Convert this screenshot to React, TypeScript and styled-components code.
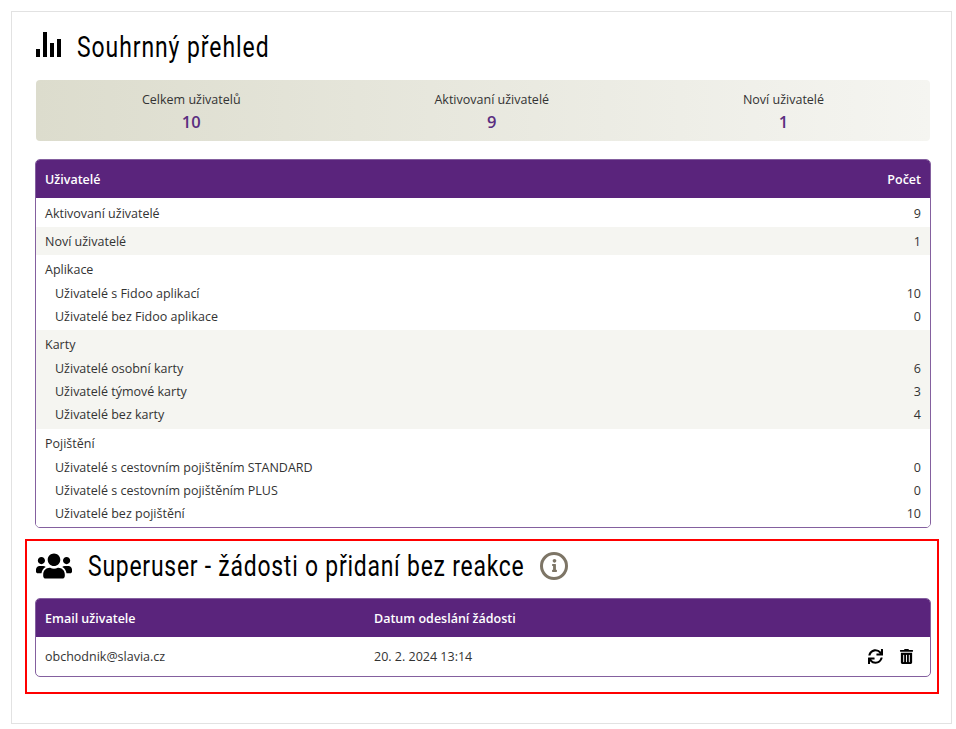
import React from "react";
import styled, { createGlobalStyle } from "styled-components";
import { FaUsers, FaSync, FaTrashAlt, FaInfo } from "react-icons/fa";

const GlobalStyle = createGlobalStyle`
  html, body {
    margin: 0;
    padding: 0;
    background: #fff;
  }
  body {
    font-family: "Open Sans", "Liberation Sans", sans-serif;
    font-size: 12.5px;
    color: #333;
  }
`;

const userRows = [
  { label: "Uživatelé s Fidoo aplikací", value: 10 },
  { label: "Uživatelé bez Fidoo aplikace", value: 0 },
];
const cardRows = [
  { label: "Uživatelé osobní karty", value: 6 },
  { label: "Uživatelé týmové karty", value: 3 },
  { label: "Uživatelé bez karty", value: 4 },
];
const insuranceRows = [
  { label: "Uživatelé s cestovním pojištěním STANDARD", value: 0 },
  { label: "Uživatelé s cestovním pojištěním PLUS", value: 0 },
  { label: "Uživatelé bez pojištění", value: 10 },
];

const Group = ({ title, rows, striped }: { title: string; rows: { label: string; value: number }[]; striped?: boolean }) => (
  <GroupBox $striped={striped}>
    <GroupTitle>{title}</GroupTitle>
    {rows.map((r) => (
      <SubRow key={r.label}>
        <span>{r.label}</span>
        <span>{r.value}</span>
      </SubRow>
    ))}
  </GroupBox>
);

const App: React.FC = () => {
  return (
    <Frame>
      <GlobalStyle />
      <Heading>
        <ChartIcon width="25" height="25" viewBox="0 0 25 25" fill="#000">
          <rect x="0" y="17" width="4" height="8" />
          <rect x="7" y="0" width="4" height="25" />
          <rect x="14" y="11" width="4" height="14" />
          <rect x="21" y="7" width="4" height="18" />
        </ChartIcon>
        <HeadingText $width={192} $spacing={1.2}>Souhrnný přehled</HeadingText>
      </Heading>

      <Summary>
        <SummaryItem>
          Celkem uživatelů
          <SummaryValue>10</SummaryValue>
        </SummaryItem>
        <SummaryItem>
          Aktivovaní uživatelé
          <SummaryValue>9</SummaryValue>
        </SummaryItem>
        <SummaryItem>
          Noví uživatelé
          <SummaryValue>1</SummaryValue>
        </SummaryItem>
      </Summary>

      <Panel>
        <HeaderRow>
          <span>Uživatelé</span>
          <span>Počet</span>
        </HeaderRow>
        <Row>
          <span>Aktivovaní uživatelé</span>
          <span>9</span>
        </Row>
        <Row $striped>
          <span>Noví uživatelé</span>
          <span>1</span>
        </Row>
        <Group title="Aplikace" rows={userRows} />
        <Group title="Karty" rows={cardRows} striped />
        <Group title="Pojištění" rows={insuranceRows} />
      </Panel>

      <Highlight>
        <SectionHeading>
          <FaUsers size={36} color="#000" />
          <HeadingText $width={436} $spacing={0.98}>Superuser - žádosti o přidaní bez reakce</HeadingText>
          <InfoBadge>
            <FaInfo size={13} />
          </InfoBadge>
        </SectionHeading>
        <Panel>
          <RequestHeader>
            <span>Email uživatele</span>
            <span>Datum odeslání žádosti</span>
          </RequestHeader>
          <RequestRow>
            <span>obchodnik@slavia.cz</span>
            <span>20. 2. 2024 13:14</span>
            <Actions>
              <FaSync size={15} />
              <FaTrashAlt size={15} />
            </Actions>
          </RequestRow>
        </Panel>
      </Highlight>
    </Frame>
  );
};

export default App;

const Frame = styled.div`
  box-sizing: border-box;
  width: 941px;
  height: 713px;
  margin: 11px 0 0 11px;
  padding: 17px 21px 0 24px;
  border: 1px solid #e2e2e2;
`;

const Heading = styled.div`
  display: flex;
  align-items: center;
  gap: 16px;
  height: 36px;
  margin-bottom: 15px;
`;

const ChartIcon = styled.svg`
  margin-bottom: 5px;
`;

const HeadingText = styled.div<{ $width: number; $spacing: number }>`
  width: ${(p) => p.$width}px;
  font-family: "Roboto", sans-serif;
  font-size: 29px;
  letter-spacing: ${(p) => p.$spacing}px;
  line-height: 36px;
  color: #000;
  white-space: nowrap;
  transform: scaleX(0.79);
  transform-origin: left center;
`;

const Summary = styled.div`
  display: flex;
  justify-content: space-around;
  height: 61px;
  padding: 0 9px;
  margin-bottom: 18px;
  border-radius: 4px;
  background: linear-gradient(to right, #dcdccd, #f5f5f1);
`;

const SummaryItem = styled.div`
  display: flex;
  flex-direction: column;
  align-items: center;
  padding-top: 11px;
  line-height: 18px;
  color: #333;
`;

const SummaryValue = styled.div`
  margin-top: 3px;
  font-size: 16.5px;
  line-height: 20px;
  font-weight: 600;
  color: #5a2d80;
`;

const Panel = styled.div`
  box-sizing: border-box;
  overflow: hidden;
  margin: 0 -1px;
  border: 1px solid #84609f;
  border-radius: 5px;
`;

const HeaderRow = styled.div`
  box-sizing: border-box;
  display: flex;
  justify-content: space-between;
  align-items: center;
  height: 38px;
  padding: 1px 9px 0;
  background: #5a247c;
  color: #fff;
  font-weight: 600;
`;

const Row = styled.div<{ $striped?: boolean }>`
  box-sizing: border-box;
  display: flex;
  justify-content: space-between;
  align-items: center;
  height: 28.6px;
  padding: ${(p) => (p.$striped ? "1px" : "2px")} 9px 0;
  background: ${(p) => (p.$striped ? "#f5f5f1" : "#fff")};
`;

const GroupBox = styled.div<{ $striped?: boolean }>`
  padding: 3px 9px ${(p) => (p.$striped ? "2.8px" : "2px")};
  background: ${(p) => (p.$striped ? "#f5f5f1" : "#fff")};
`;

const GroupTitle = styled.div`
  margin-bottom: 1px;
  line-height: 23px;
`;

const SubRow = styled.div`
  display: flex;
  justify-content: space-between;
  padding-left: 10px;
  line-height: 23px;
`;

const Highlight = styled.div`
  box-sizing: border-box;
  height: 155px;
  margin: 11px -9px 0 -11px;
  padding: 0 7px 0 9px;
  border: 2px solid #f00;
`;

const SectionHeading = styled.div`
  display: flex;
  align-items: center;
  gap: 16px;
  height: 50px;
  margin-bottom: 7px;
`;

const InfoBadge = styled.div`
  box-sizing: border-box;
  display: flex;
  align-items: center;
  justify-content: center;
  width: 28px;
  height: 28px;
  border: 3px solid #7d7566;
  border-radius: 50%;
  color: #7d7566;
`;

const RequestHeader = styled(HeaderRow)`
  display: grid;
  grid-template-columns: 329px 1fr;
`;

const RequestRow = styled.div`
  display: grid;
  grid-template-columns: 329px 1fr auto;
  align-items: center;
  height: 39px;
  padding: 0 9px;
`;

const Actions = styled.div`
  display: flex;
  align-items: center;
  gap: 16px;
  padding-right: 7px;
  color: #000;
`;
